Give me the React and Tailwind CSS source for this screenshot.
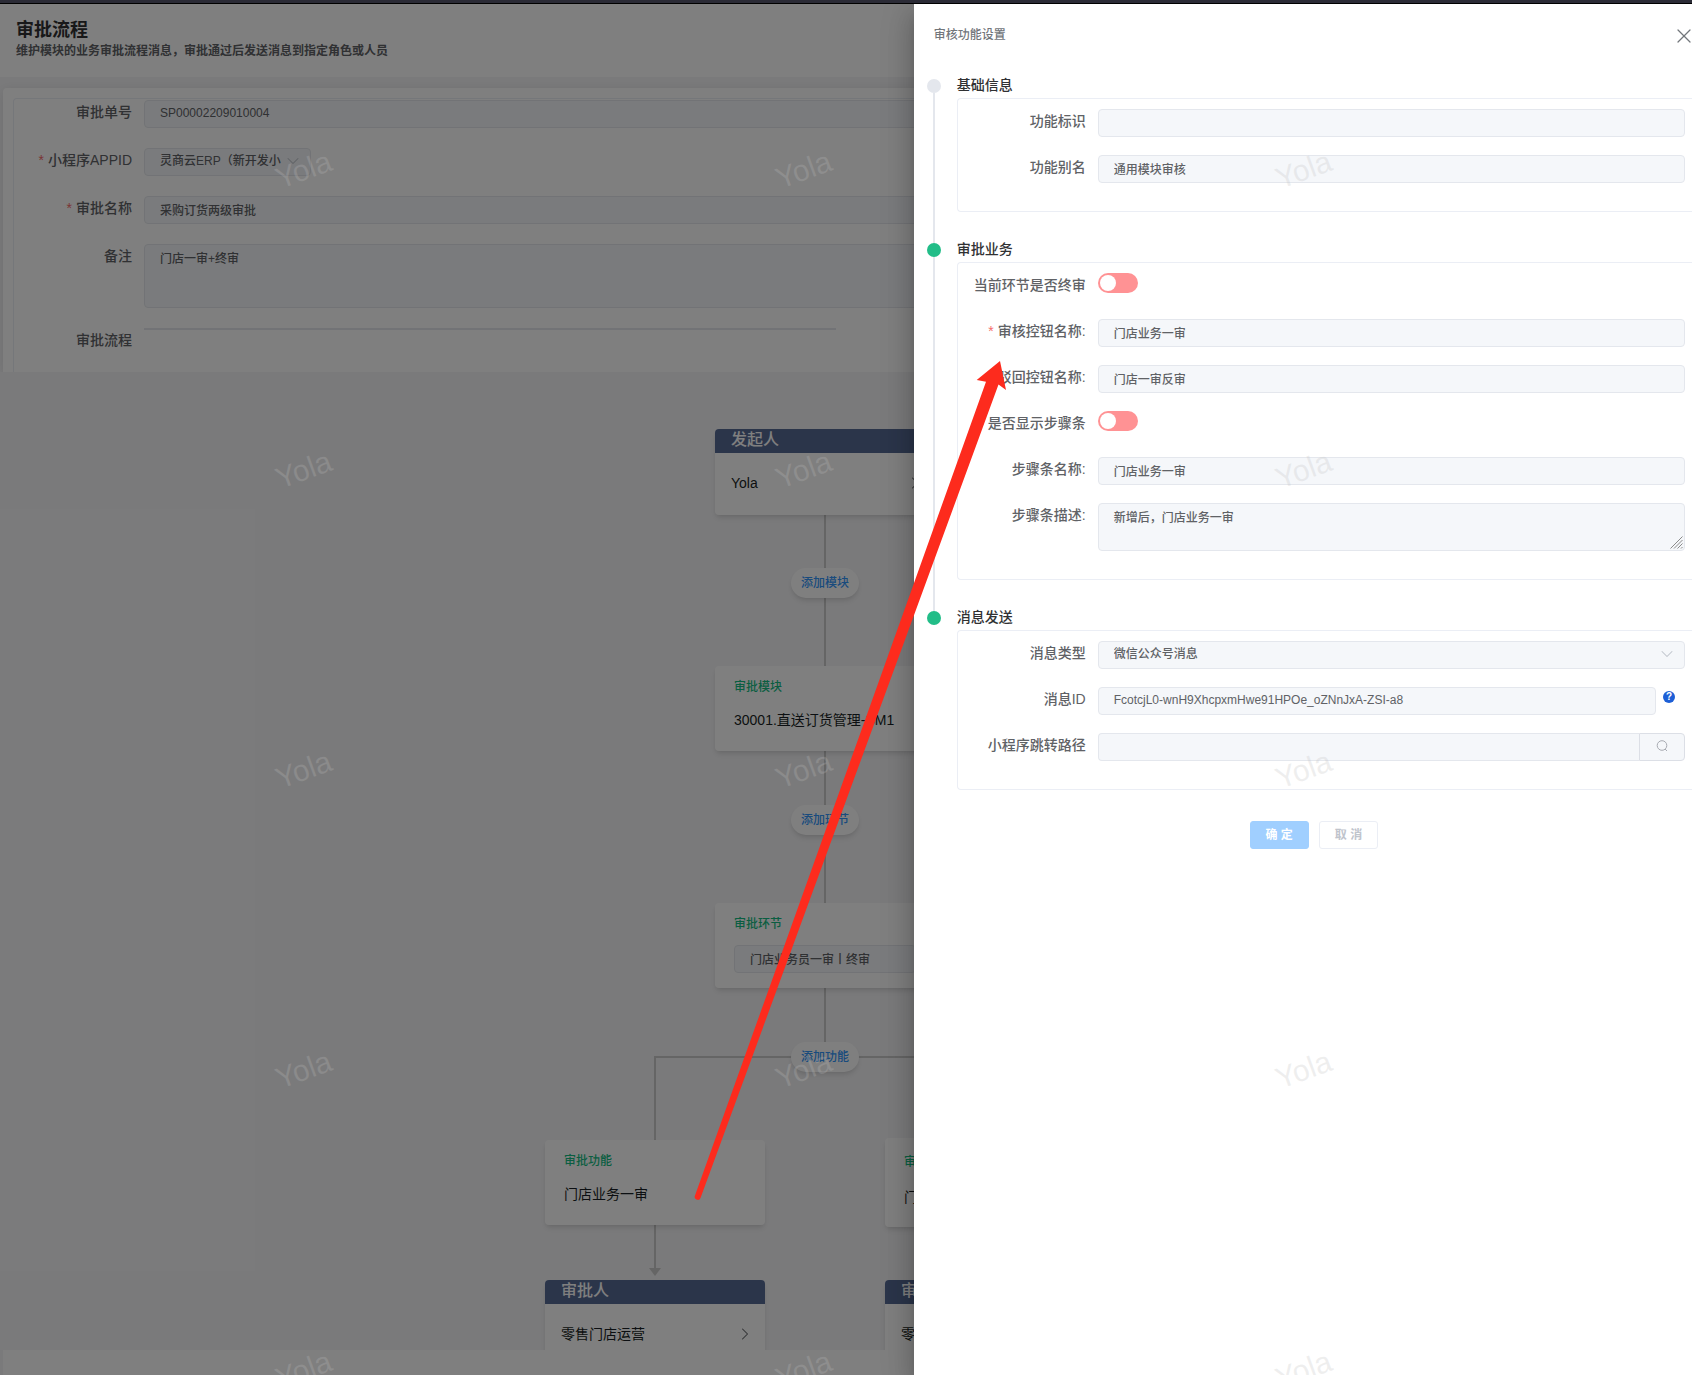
import { ChevronDown, ChevronRight, X } from 'lucide-react';

const inputClass =
  'block h-7 w-full min-w-0 rounded border border-[#e4e7ed] bg-[#f5f7fa] px-[15px] pb-0.5 text-xs font-medium text-[#606266] outline-none';

const textareaClass =
  'block w-full resize-none rounded border border-[#e4e7ed] bg-[#f5f7fa] px-[15px] py-[5px] text-xs leading-[18px] font-medium text-[#606266]';

const watermarks = [...Array(15).keys()];

function FormRow({ id, label, required, children }) {
  return (
    <div className="mb-[18px] flex items-start">
      <label htmlFor={id} className="w-35 shrink-0 pr-3 text-right text-sm leading-6 font-medium text-[#606266]">
        {required && <span className="mr-1 text-[#f56c6c]">*</span>}
        {label}
      </label>
      <div className="flex min-w-0 flex-1 items-start">{children}</div>
    </div>
  );
}

function PageRow({ id, label, required, children }) {
  return (
    <div className="flex items-start">
      <label htmlFor={id} className="w-[130px] shrink-0 pr-3 text-right text-sm leading-6 font-medium text-[#606266]">
        {required && <span className="mr-1 text-[#f56c6c]">*</span>}
        {label}
      </label>
      <div className="min-w-0 flex-1">{children}</div>
    </div>
  );
}

function Switch({ id }) {
  return (
    <input
      id={id}
      type="checkbox"
      role="switch"
      disabled
      className="h-5 w-10 appearance-none rounded-full bg-[#ff9294] p-0.5 before:block before:size-4 before:rounded-full before:bg-white before:content-['']"
    />
  );
}

function Section({ title, active, last, children }) {
  return (
    <li className="flex gap-4">
      <div className="flex w-3.5 shrink-0 flex-col items-center">
        <span className={active ? 'size-3.5 rounded-full bg-[#22bd88]' : 'size-3.5 rounded-full bg-[#e4e7ed]'} />
        {!last && <span className="w-0.5 flex-1 bg-[#e4e7ed]" />}
      </div>
      <div className="min-w-0 flex-1 pb-[31px]">
        <h3 className="mb-[7px] text-sm leading-3 font-medium text-[#303133]">{title}</h3>
        <div className="rounded-l border border-r-0 border-[#ebeef5] bg-white py-[10px] pr-[7px]">{children}</div>
      </div>
    </li>
  );
}

function PersonNode({ className, title, name }) {
  return (
    <div className={`absolute h-[86px] w-[220px] overflow-hidden rounded bg-white shadow-md ${className}`}>
      <div className="h-6 bg-[#576a95] pl-4 text-base leading-[22px] font-medium text-white">{title}</div>
      <div className="flex items-center justify-between pt-5 pr-2.5 pl-4 text-sm text-[#191f25]">
        <span>{name}</span>
        <ChevronRight className="size-5 text-[#606266]" strokeWidth={1.25} />
      </div>
    </div>
  );
}

function StepNode({ className, title, children }) {
  return (
    <div className={`absolute w-[220px] rounded bg-white px-[19px] shadow-md ${className}`}>
      <p className="pt-[11px] text-xs leading-5 font-medium text-[#15bc83]">{title}</p>
      {children}
    </div>
  );
}

function AddButton({ className, children }) {
  return (
    <button
      type="button"
      className={`absolute left-[791px] h-[30px] w-[68px] rounded-full bg-white text-xs font-medium text-[#3296fa] shadow-md ${className}`}
    >
      {children}
    </button>
  );
}

function FlowCanvas() {
  return (
    <section className="relative h-[978px] overflow-hidden bg-[#f5f5f7]">
      {/* Connectors */}
      <div className="absolute top-[143px] left-[824px] h-[542px] w-0.5 bg-[#cacaca]" />
      <div className="absolute top-[684px] left-[654px] h-[84px] w-[342px] border-2 border-b-0 border-[#cacaca]" />
      <div className="absolute top-[853px] left-[654px] h-[44px] w-0.5 bg-[#cacaca]" />
      <svg className="absolute top-[896px] left-[649px]" width="12" height="8" viewBox="0 0 12 8">
        <path d="M0 0h12L6 8z" fill="#cacaca" />
      </svg>

      <PersonNode className="top-[57px] left-[715px]" title="发起人" name="Yola" />
      <AddButton className="top-[196px]">添加模块</AddButton>
      <StepNode className="top-[294px] left-[715px] h-[85px]" title="审批模块">
        <p className="pt-2 text-sm leading-[30px] text-[#191f25]">30001.直送订货管理-SM1</p>
      </StepNode>
      <AddButton className="top-[433px]">添加环节</AddButton>
      <StepNode className="top-[531px] left-[715px] h-[85px]" title="审批环节">
        <input aria-label="审批环节" className={`mt-[11px] ${inputClass}`} defaultValue="门店业务员一审丨终审" disabled />
      </StepNode>
      <AddButton className="top-[670px]">添加功能</AddButton>
      <StepNode className="top-[768px] left-[545px] h-[85px]" title="审批功能">
        <p className="pt-2 text-sm leading-[30px] text-[#191f25]">门店业务一审</p>
      </StepNode>
      <StepNode className="top-[766px] left-[885px] h-[89px] pt-[3px]" title="审批功能">
        <p className="pt-2 text-sm leading-[34px] text-[#191f25]">门店业务二审</p>
      </StepNode>
      <PersonNode className="top-[908px] left-[545px]" title="审批人" name="零售门店运营" />
      <PersonNode className="top-[908px] left-[885px]" title="审批人" name="零售门店运营" />
    </section>
  );
}

function Drawer() {
  return (
    <aside className="absolute top-1 right-0 bottom-0 w-[46%] overflow-hidden bg-white">
      <header className="mb-8 flex items-start justify-between pt-5 pr-0.5 pl-5">
        <h2 className="text-xs leading-[23px] font-medium text-[#72767b]">审核功能设置</h2>
        <button type="button" aria-label="关闭" className="mt-1.5">
          <X className="-m-1.5 size-6 text-[#72767b]" strokeWidth={1.25} />
        </button>
      </header>

      <ul className="pl-[13px]">
        <Section title="基础信息">
          <FormRow id="func-key" label="功能标识">
            <input id="func-key" className={inputClass} disabled />
          </FormRow>
          <FormRow id="func-alias" label="功能别名">
            <input id="func-alias" className={inputClass} defaultValue="通用模块审核" disabled />
          </FormRow>
        </Section>

        <Section title="审批业务" active>
          <FormRow id="is-final" label="当前环节是否终审">
            <div className="flex h-7 items-start">
              <Switch id="is-final" />
            </div>
          </FormRow>
          <FormRow id="pass-name" label="审核控钮名称:" required>
            <input id="pass-name" className={inputClass} defaultValue="门店业务一审" disabled />
          </FormRow>
          <FormRow id="reject-name" label="驳回控钮名称:">
            <input id="reject-name" className={inputClass} defaultValue="门店一审反审" disabled />
          </FormRow>
          <FormRow id="show-steps" label="是否显示步骤条">
            <div className="flex h-7 items-start">
              <Switch id="show-steps" />
            </div>
          </FormRow>
          <FormRow id="step-name" label="步骤条名称:">
            <input id="step-name" className={inputClass} defaultValue="门店业务一审" disabled />
          </FormRow>
          <FormRow id="step-desc" label="步骤条描述:">
            <div className="relative flex-1">
              <textarea
                id="step-desc"
                className={`h-12 ${textareaClass}`}
                defaultValue="新增后，门店业务一审"
                disabled
              />
              <svg className="absolute right-0.5 bottom-0.5" width="13" height="13" viewBox="0 0 13 13" stroke="#8a8a8a">
                <path d="M0.5 12.5l12-12M4 12.5l8.500-8.500M7.500 12.500l5-5M11 12.500l1.500-1.500" fill="none" />
              </svg>
            </div>
          </FormRow>
        </Section>

        <Section title="消息发送" active last>
          <FormRow id="msg-type" label="消息类型">
            <div className="relative flex-1">
              <select id="msg-type" className={`appearance-none opacity-100 ${inputClass}`} disabled>
                <option>微信公众号消息</option>
              </select>
              <ChevronDown className="absolute top-[3px] right-2 size-5 text-[#c0c4cc]" strokeWidth={1.25} />
            </div>
          </FormRow>
          <FormRow id="msg-id" label="消息ID">
            <input id="msg-id" className={inputClass} defaultValue="FcotcjL0-wnH9XhcpxmHwe91HPOe_oZNnJxA-ZSI-a8" disabled />
            <span className="mt-1 mr-[10px] ml-[7px] flex size-3 shrink-0 items-center justify-center rounded-full bg-[#1d5fd6] text-[10px] leading-3 font-bold text-white">
              ?
            </span>
          </FormRow>
          <FormRow id="jump-path" label="小程序跳转路径">
            <input id="jump-path" className={`rounded-r-none border-r-0 ${inputClass}`} disabled />
            <button
              type="button"
              aria-label="搜索"
              className="flex h-7 w-[46px] shrink-0 justify-center rounded-r border border-[#dcdfe6] bg-[#f5f7fa] pt-1.5 text-[#a8abb2]"
            >
              <svg width="12" height="12" viewBox="0 0 12 12" fill="none" stroke="currentColor">
                <circle cx="6" cy="5.500" r="4.800" />
                <path d="M9 9l2 2" />
              </svg>
            </button>
          </FormRow>
        </Section>
      </ul>

      <div className="flex justify-center gap-2.5 pl-[22px]">
        <button type="button" disabled className="h-7 rounded-[3px] border border-[#a0cfff] bg-[#a0cfff] px-[15px] text-xs leading-[22px] font-bold text-white">
          确 定
        </button>
        <button type="button" disabled className="h-7 rounded-[3px] border border-[#ebeef5] bg-white px-[15px] text-xs leading-[22px] font-bold text-[#c0c4cc]">
          取 消
        </button>
      </div>
    </aside>
  );
}

export default function App() {
  return (
    <div className="relative flex min-h-screen flex-col overflow-hidden bg-[#f5f5f7] font-['Liberation_Sans','Noto_Sans_CJK_SC',sans-serif]">
      <div className="relative z-10 h-1 border-b border-black bg-[#2b2b36]" />

      <header className="h-[73px] bg-white px-4 pt-3.5">
        <h1 className="text-lg leading-6 font-bold text-[#303133]">审批流程</h1>
        <p className="text-xs leading-[18px] font-bold text-[#606266]">维护模块的业务审批流程消息，审批通过后发送消息到指定角色或人员</p>
      </header>

      <main className="mt-[11px] ml-[3px] h-[284px] rounded-t bg-white px-2.5 pt-2.5 shadow-[0_2px_12px_rgba(0,0,0,0.1)]">
        <div className="flex h-full flex-col gap-5 rounded-t border border-b-0 border-[#ebeef5] pt-px">
          <PageRow id="order-no" label="审批单号">
            <input id="order-no" className={inputClass} defaultValue="SP00002209010004" disabled />
          </PageRow>
          <PageRow id="app-id" label="小程序APPID" required>
            <div className="relative w-[167px]">
              <select id="app-id" className={`appearance-none opacity-100 ${inputClass}`} disabled>
                <option>灵商云ERP（新开发小</option>
              </select>
              <ChevronDown className="absolute top-[3px] right-2 size-5 text-[#c0c4cc]" strokeWidth={1.25} />
            </div>
          </PageRow>
          <PageRow id="flow-name" label="审批名称" required>
            <input id="flow-name" className={inputClass} defaultValue="采购订货两级审批" disabled />
          </PageRow>
          <PageRow id="remark" label="备注">
            <textarea id="remark" className={`h-16 ${textareaClass}`} defaultValue="门店一审+终审" disabled />
          </PageRow>
          <PageRow label="审批流程">
            <hr className="w-[692px] border-t-2 border-[#e4e7ed]" />
          </PageRow>
        </div>
      </main>

      <FlowCanvas />
      <footer className="ml-[3px] min-h-6 flex-1 bg-white" />

      {/* Mask and drawer */}
      <div className="absolute inset-0 bg-black/50" />
      <div className="absolute top-1 right-0 bottom-0 w-[46%] shadow-[0_8px_10px_-5px_rgba(0,0,0,0.2),0_16px_24px_2px_rgba(0,0,0,0.14),0_6px_30px_5px_rgba(0,0,0,0.12)]" />
      <Drawer />

      {/* Watermark */}
      <div aria-hidden="true" className="pointer-events-none absolute inset-0 grid grid-cols-[repeat(auto-fill,500px)] content-start overflow-hidden pt-5 pl-[54px]">
        {watermarks.map((n) => (
          <div key={n} className="flex h-[300px] items-center justify-center">
            <span className="-rotate-20 text-3xl leading-9 text-[#bebebe]/25">Yola</span>
          </div>
        ))}
      </div>

      {/* Arrow from the node to its settings */}
      <svg className="pointer-events-none absolute top-[355px] left-[690px]" width="320" height="850" viewBox="690 355 320 850">
        <path d="M1000 361L976.700 380L986 381.700L695 1195.500A3 3 0 0 0 700.500 1198L998.500 384.500L1006 390z" fill="#fd2b1d" />
      </svg>
    </div>
  );
}
